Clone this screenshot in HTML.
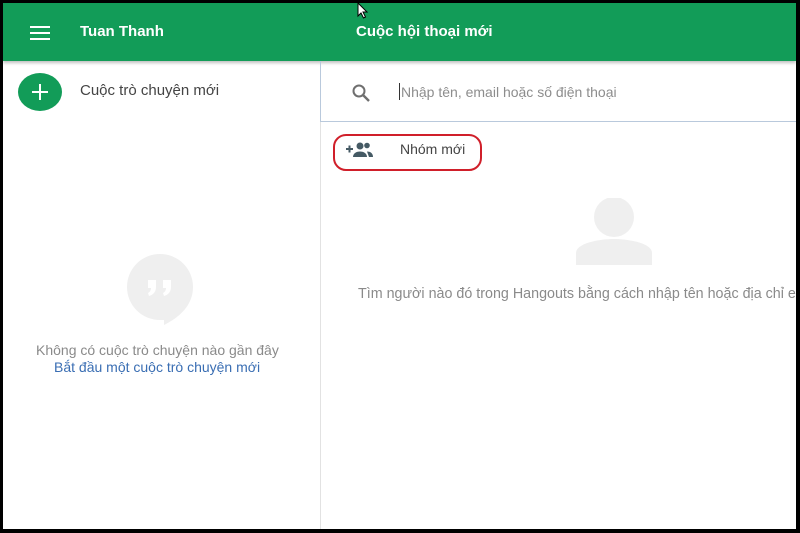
<!DOCTYPE html>
<html><head><meta charset="utf-8"><style>
*{margin:0;padding:0;box-sizing:border-box}
body{width:800px;height:533px;background:#000;position:relative;overflow:hidden;font-family:"Liberation Sans",Arial,sans-serif}
.page{position:absolute;left:3px;top:3px;width:793px;height:526px;background:#fff;overflow:hidden}
.hdr{position:absolute;left:0;top:0;width:793px;height:58px;background:#129c58;box-shadow:0 2px 3px rgba(0,0,0,.25)}
.hdr .t{position:absolute;top:20px;color:#fff;font-size:15px;font-weight:bold}
.ham{position:absolute;left:27px;top:23px;width:20px}
.ham i{display:block;height:2px;background:#fff;margin-bottom:4px}
.div{position:absolute;left:317px;top:58px;width:1px;height:468px;background:#e2e2e2}
.fab{position:absolute;left:15px;top:70px;width:44px;height:38px;border-radius:50%;background:#129c58}
.fab:before{content:"";position:absolute;left:14px;top:18px;width:16px;height:2px;background:#fff}
.fab:after{content:"";position:absolute;left:21px;top:11px;width:2px;height:16px;background:#fff}
.search{position:absolute;left:317px;top:58px;width:476px;height:61px;border:1px solid #b9c9dc;border-top:none;border-right:none}
.ph{position:absolute;left:78px;top:23px;font-size:14px;color:#8d8d8d;white-space:nowrap}
.caret{position:absolute;left:78px;top:22px;width:1px;height:17px;background:#333}
.oval{position:absolute;left:330px;top:131px;width:149px;height:37px;border:2px solid #d01f2a;border-radius:13px}
.g{color:#8a8a8a;font-size:14px;position:absolute;white-space:nowrap}
</style></head><body><div class="page">
<div class="hdr">
<div class="ham"><i></i><i></i><i></i></div>
<div class="t" style="left:77px">Tuan Thanh</div>
<div class="t" style="left:353px">Cuộc hội thoại mới</div>
</div>
<div class="fab"></div>
<div style="position:absolute;left:77px;top:79px;font-size:15px;color:#444">Cuộc trò chuyện mới</div>
<div class="div"></div>
<div class="search">
<svg style="position:absolute;left:30px;top:22px" width="20" height="20" viewBox="0 0 20 20"><circle cx="8" cy="8" r="5.5" fill="none" stroke="#6f6f6f" stroke-width="2"/><path d="M12 12l6 6" stroke="#6f6f6f" stroke-width="2.4"/></svg>
<div class="caret"></div>
<div class="ph" style="left:80px">Nhập tên, email hoặc số điện thoại</div>
</div>
<div class="oval"></div>
<svg style="position:absolute;left:342px;top:138px" width="30" height="18" viewBox="0 0 30 18"><path d="M1 8h7M4.5 4.5v7" stroke="#455a64" stroke-width="2"/><circle cx="15" cy="5" r="3.5" fill="#455a64"/><path d="M8 16c0-4 4-5.5 7-5.5s7 1.5 7 5.5z" fill="#455a64"/><circle cx="22" cy="4.5" r="2.8" fill="#455a64"/><path d="M22 10.5c3 0 6 1.5 6 5.5h-4" fill="#455a64"/></svg>
<div style="position:absolute;left:397px;top:138px;font-size:14px;color:#444">Nhóm mới</div>
<svg style="position:absolute;left:123px;top:250px" width="68" height="72" viewBox="0 0 68 72"><path d="M34 1a33 33 0 0 0 0 66h4v5c16-8 29-20 29-38A33 33 0 0 0 34 1z" fill="#efefef"/><path d="M22 27h8v7c0 5-3 8-7 9l-1-3c2-1 3-3 3-5h-3zM37 27h8v7c0 5-3 8-7 9l-1-3c2-1 3-3 3-5h-3z" fill="#fff"/></svg>
<div class="g" style="left:33px;top:339px">Không có cuộc trò chuyện nào gần đây</div>
<div class="g" style="left:51px;top:356px;color:#3a6eb3">Bắt đầu một cuộc trò chuyện mới</div>
<svg style="position:absolute;left:573px;top:195px" width="76" height="68" viewBox="0 0 76 68"><circle cx="38" cy="19" r="20" fill="#efefef"/><path d="M0 67v-12c0-10 24-14 38-14s38 4 38 14v12z" fill="#efefef"/></svg>
<div class="g" style="left:355px;top:283px;font-size:14.3px">Tìm người nào đó trong Hangouts bằng cách nhập tên hoặc địa chỉ email</div>
<svg style="position:absolute;left:354px;top:0" width="12" height="16" viewBox="0 0 12 16"><path d="M1 0v13l3-3 2.5 5 2-1-2.5-5h4z" fill="#fff" stroke="#000" stroke-width="1"/></svg>
</div></body></html>
